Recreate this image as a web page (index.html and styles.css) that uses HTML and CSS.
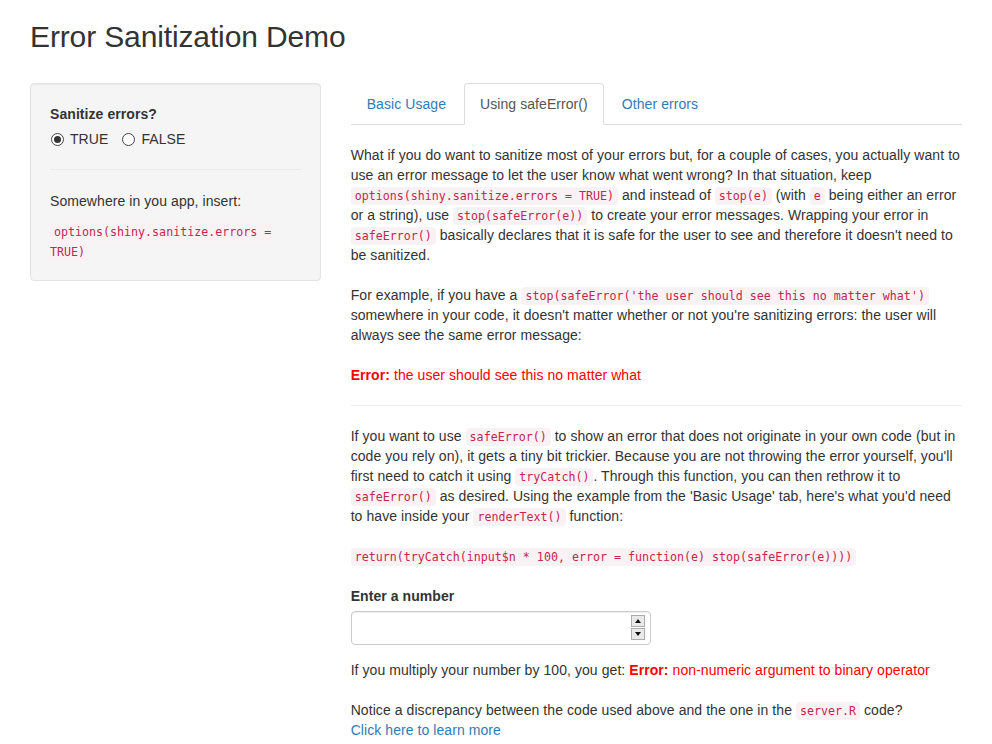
FILE: index.html
```html
<!DOCTYPE html>
<html>
<head>
<meta charset="utf-8">
<title>Error Sanitization Demo</title>
<link rel="stylesheet" href="styles.css">
</head>
<body>
<div class="container">
  <h2 class="title">Error Sanitization Demo</h2>
  <div class="layout">
    <div class="sidebar">
      <div class="well">
        <div class="control-label">Sanitize errors?</div>
        <div class="radio-group">
          <label class="radio-inline"><input type="radio" name="sanitize" checked><span>TRUE</span></label>
          <label class="radio-inline"><input type="radio" name="sanitize"><span>FALSE</span></label>
        </div>
        <hr class="well-hr">
        <p>Somewhere in you app, insert:</p>
        <div class="snippet"><code>options(shiny.sanitize.errors = TRUE)</code></div>
      </div>
    </div>
    <div class="main">
      <ul class="nav-tabs">
        <li><a class="tab" href="#">Basic Usage</a></li>
        <li><a class="tab active" href="#">Using safeError()</a></li>
        <li><a class="tab" href="#">Other errors</a></li>
      </ul>
      <div class="tab-content">
        <p>What if you do want to sanitize most of your errors but, for a couple of cases, you actually want to use an error message to let the user know what went wrong? In that situation, keep <code>options(shiny.sanitize.errors = TRUE)</code> and instead of <code>stop(e)</code> (with <code>e</code> being either an error or a string), use <code>stop(safeError(e))</code> to create your error messages. Wrapping your error in <code>safeError()</code> basically declares that it is safe for the user to see and therefore it doesn't need to be sanitized.</p>
        <p>For example, if you have a <code>stop(safeError('the user should see this no matter what')</code> somewhere in your code, it doesn't matter whether or not you're sanitizing errors: the user will always see the same error message:</p>
        <div class="output-error"><strong>Error:</strong> the user should see this no matter what</div>
        <hr class="divider">
        <p>If you want to use <code>safeError()</code> to show an error that does not originate in your own code (but in code you rely on), it gets a tiny bit trickier. Because you are not throwing the error yourself, you'll first need to catch it using <code>tryCatch()</code>. Through this function, you can then rethrow it to <code>safeError()</code> as desired. Using the example from the 'Basic Usage' tab, here's what you'd need to have inside your <code>renderText()</code> function:</p>
        <div class="code-line"><code>return(tryCatch(input$n * 100, error = function(e) stop(safeError(e))))</code></div>
        <div class="form-group">
          <label class="control-label" for="n">Enter a number</label>
          <div class="input-wrap">
            <input id="n" class="form-control" type="number">
            <div class="spinner" aria-hidden="true">
              <span class="spin up"><i></i></span>
              <span class="spin down"><i></i></span>
            </div>
          </div>
        </div>
        <p>If you multiply your number by 100, you get: <span class="output-error"><strong>Error:</strong> non-numeric argument to binary operator</span></p>
        <p class="notice">Notice a discrepancy between the code used above and the one in the <code>server.R</code> code?<br><a href="#">Click here to learn more</a></p>
      </div>
    </div>
  </div>
</div>
</body>
</html>
```

FILE: styles.css
```css
* { box-sizing: border-box; }

html, body {
  margin: 0;
  padding: 0;
  background: #fff;
}

body {
  font-family: "Liberation Sans", Arial, Helvetica, sans-serif;
  font-size: 14px;
  line-height: 20px;
  letter-spacing: 0.07px;
  color: #333;
}

.container {
  padding: 0 30px;
}

.title {
  font-family: "Liberation Sans", Arial, sans-serif;
  font-size: 30px;
  font-weight: 500;
  line-height: 33px;
  letter-spacing: -0.13px;
  margin: 20px 0 30px;
  color: #333;
}

.layout {
  display: grid;
  grid-template-columns: calc((100% + 30px) / 3 - 30px) 1fr;
  column-gap: 30px;
  align-items: start;
}

p {
  margin: 0 0 10px;
}

code {
  font-family: "DejaVu Sans Mono", "Liberation Mono", monospace;
  font-size: 11.65px;
  line-height: 1;
  letter-spacing: 0;
  padding: 2px 4px;
  color: #c7254e;
  background: #f9f2f4;
  border-radius: 4px;
}

a {
  color: #337ab7;
  text-decoration: none;
}

/* sidebar */
.well {
  background: #f5f5f5;
  border: 1px solid #e3e3e3;
  border-radius: 4px;
  box-shadow: inset 0 1px 1px rgba(0, 0, 0, 0.05);
  padding: 20px 19px 19px;
}

.control-label {
  display: block;
  font-weight: 700;
  margin-bottom: 5px;
}

.radio-group {
  display: flex;
  gap: 13px;
  margin-top: 3px;
}

.radio-inline {
  display: inline-flex;
  align-items: center;
  gap: 6px;
  font-weight: 400;
  cursor: pointer;
}

.radio-inline input {
  -webkit-appearance: none;
  appearance: none;
  width: 13px;
  height: 13px;
  margin: 0 0 0 1px;
  border: 1px solid #444;
  border-radius: 50%;
  background: #fff;
  display: grid;
  place-items: center;
}

.radio-inline input:checked::after {
  content: "";
  width: 7px;
  height: 7px;
  border-radius: 50%;
  background: #333;
}

.well-hr {
  border: 0;
  border-top: 1px solid #eaeaea;
  margin: 20px 0 21px;
}

.well p {
  margin-bottom: 10px;
}

.snippet {
  line-height: 20px;
}

/* tabs */
.nav-tabs {
  list-style: none;
  margin: 0;
  padding: 0;
  display: flex;
  border-bottom: 1px solid #ddd;
}

.nav-tabs li {
  margin-bottom: -1px;
  margin-right: 2px;
}

.tab {
  display: block;
  padding: 10px 15px;
  line-height: 20px;
  border: 1px solid transparent;
  border-radius: 4px 4px 0 0;
  color: #337ab7;
}

.tab.active {
  color: #555;
  background: #fff;
  border-color: #ddd;
  border-bottom-color: transparent;
}

.tab-content {
  padding-top: 20px;
}

.tab-content > * {
  margin: 0 0 20px;
}

.output-error {
  color: #ff0000;
}

.tab-content > .divider {
  border: 0;
  border-top: 1px solid #eee;
  height: 0;
  margin: 0 0 20px;
}

.tab-content > .form-group {
  margin-bottom: 15px;
}

.form-group .control-label {
  margin-bottom: 5px;
}

.input-wrap {
  position: relative;
  width: 300px;
}

.form-control {
  display: block;
  width: 300px;
  height: 34px;
  padding: 6px 12px;
  font-family: inherit;
  font-size: 14px;
  color: #555;
  background: #fff;
  border: 1px solid #ccc;
  border-radius: 4px;
  box-shadow: inset 0 1px 1px rgba(0, 0, 0, 0.075);
  -moz-appearance: textfield;
}

.form-control::-webkit-inner-spin-button,
.form-control::-webkit-outer-spin-button {
  -webkit-appearance: none;
  margin: 0;
}

.spinner {
  position: absolute;
  right: 6px;
  top: 4px;
  width: 14px;
  height: 25px;
  display: flex;
  flex-direction: column;
  gap: 1px;
}

.spin {
  flex: 1;
  display: flex;
  align-items: center;
  justify-content: center;
  border: 1px solid #acacac;
  background: #e9e9e9;
}

.spin i {
  width: 0;
  height: 0;
  border-left: 3px solid transparent;
  border-right: 3px solid transparent;
}

.up i { border-bottom: 4px solid #111; }
.down i { border-top: 4px solid #111; }
```
